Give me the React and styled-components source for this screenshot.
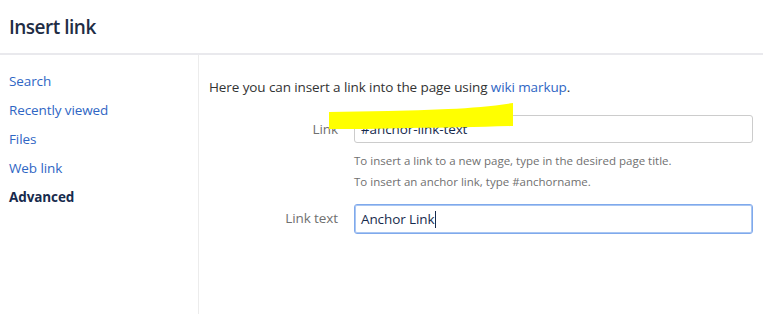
import styled, { createGlobalStyle } from "styled-components";

const GlobalStyle = createGlobalStyle`
  html, body {
    margin: 0;
    padding: 0;
    background: #ffffff;
  }
  body {
    font-family: "Open Sans", "Noto Sans", sans-serif;
    color: #333333;
  }
`;

const navItems = [
  { label: "Search" },
  { label: "Recently viewed" },
  { label: "Files" },
  { label: "Web link" },
  { label: "Advanced", active: true },
];

function App() {
  return (
    <Dialog>
      <GlobalStyle />
      <Header>
        <Title>Insert link</Title>
      </Header>
      <Body>
        <Sidebar>
          {navItems.map((item) => (
            <NavItem key={item.label} $active={item.active}>
              {item.label}
            </NavItem>
          ))}
        </Sidebar>
        <Main>
          <Intro>
            Here you can insert a link into the page using <Link>wiki markup</Link>.
          </Intro>
          <Row>
            <Label>Link</Label>
            <FieldCol>
              <Highlight viewBox="0 0 186 27" preserveAspectRatio="none">
                <path
                  d="M1 9 C40 8 80 8 120 6 C145 5 165 3 185 0 L185 23 C150 24 120 25 80 25 C50 26 25 26 1 26 Z"
                  fill="#ffff00"
                />
              </Highlight>
              <Field>#anchor-link-text</Field>
              <Help>
                To insert a link to a new page, type in the desired page title.
                <br />
                To insert an anchor link, type #anchorname.
              </Help>
            </FieldCol>
          </Row>
          <Row>
            <Label>Link text</Label>
            <FieldCol>
              <Field $focused>
                Anchor Link<Caret />
              </Field>
            </FieldCol>
          </Row>
        </Main>
      </Body>
    </Dialog>
  );
}

const Dialog = styled.div`
  width: 763px;
  height: 314px;
  display: flex;
  flex-direction: column;
  overflow: hidden;
`;
const Header = styled.div`
  height: 53px;
  display: flex;
  align-items: center;
  padding-left: 9px;
  border-bottom: 2px solid #e9e9ed;
`;
const Title = styled.h1`
  margin: 0;
  font-size: 19px;
  font-weight: 600;
  color: #1f2d45;
  letter-spacing: -0.5px;
`;
const Body = styled.div`
  flex: 1;
  display: flex;
`;
const Sidebar = styled.div`
  width: 198px;
  border-right: 1px solid #ececec;
  padding-top: 16px;
  display: flex;
  flex-direction: column;
  gap: 8px;
`;
const NavItem = styled.div`
  padding-left: 9px;
  font-size: 13.5px;
  line-height: 21px;
  color: ${(p) => (p.$active ? "#172b4d" : "#2f66c4")};
  font-weight: ${(p) => (p.$active ? 700 : 400)};
  letter-spacing: -0.1px;
`;
const Main = styled.div`
  flex: 1;
  padding: 22px 10px 0 10px;
  display: flex;
  flex-direction: column;
`;
const Intro = styled.p`
  margin: 0 0 18px;
  font-size: 13.5px;
  line-height: 20px;
  color: #333333;
  letter-spacing: -0.1px;
`;
const Link = styled.a`
  color: #2f66c4;
  text-decoration: none;
`;
const Row = styled.div`
  display: flex;
  align-items: flex-start;
  margin-bottom: 12px;
`;
const Label = styled.div`
  width: 129px;
  text-align: right;
  font-size: 13.5px;
  color: #707070;
  line-height: 28px;
  padding-right: 16px;
  letter-spacing: -0.1px;
`;
const FieldCol = styled.div`
  position: relative;
  flex: 0 0 399px;
  display: flex;
  flex-direction: column;
`;
const Field = styled.div`
  box-sizing: border-box;
  height: ${(p) => (p.$focused ? "30px" : "28px")};
  border: 1px solid ${(p) => (p.$focused ? "#7fa9ec" : "#cccccc")};
  box-shadow: ${(p) => (p.$focused ? "inset 0 0 0 1px #a9c6f2" : "none")};
  border-radius: 3px;
  padding: 0 6px;
  display: flex;
  align-items: center;
  font-size: 13.5px;
  color: #172b4d;
  letter-spacing: -0.1px;
  background: transparent;
`;
const Caret = styled.span`
  display: inline-block;
  width: 1px;
  height: 17px;
  background: #172b4d;
  margin-left: 1px;
`;
const Help = styled.div`
  margin-top: 7px;
  font-size: 11.5px;
  line-height: 21px;
  color: #707070;
`;
const Highlight = styled.svg`
  position: absolute;
  left: -26px;
  top: -12px;
  width: 186px;
  height: 27px;
  pointer-events: none;
`;

export default App;
